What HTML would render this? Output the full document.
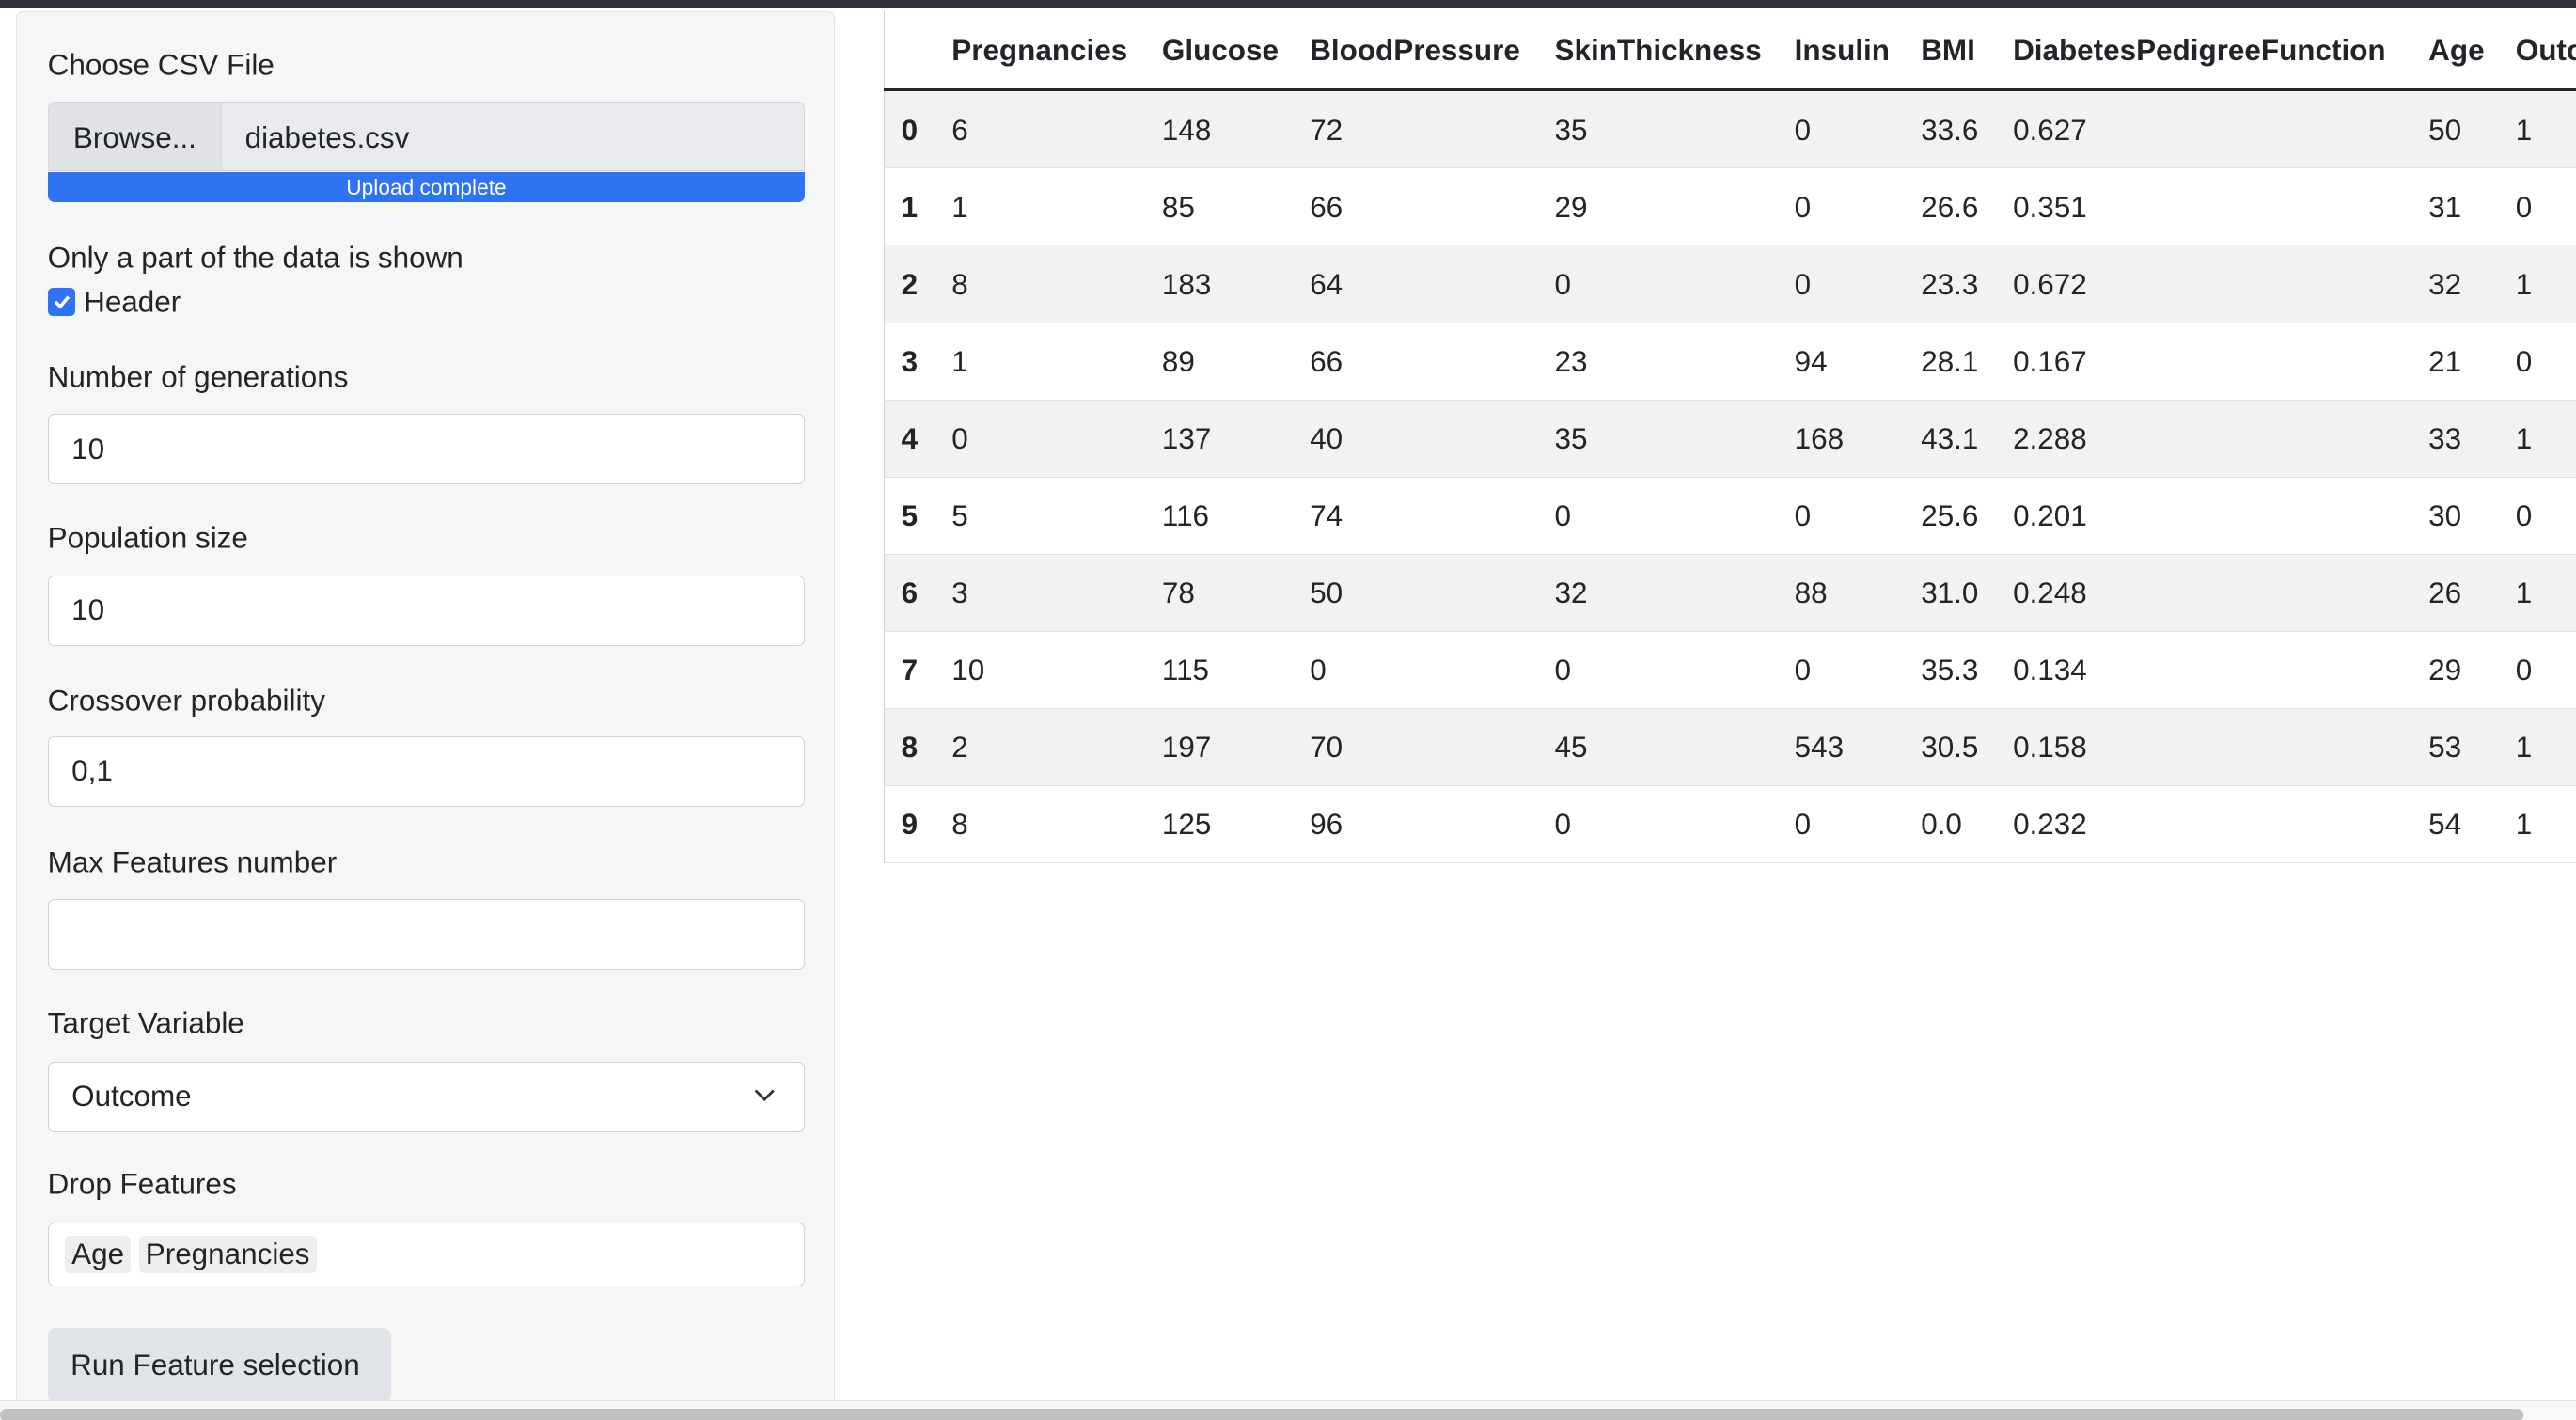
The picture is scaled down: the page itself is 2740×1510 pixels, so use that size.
<!DOCTYPE html>
<html><head><meta charset="utf-8"><style>
html,body{margin:0;padding:0;width:2740px;height:1510px;overflow:hidden;background:#fff}
#w{zoom:1.74745;width:1568px;height:864px;position:relative;overflow:hidden;font-family:"Liberation Sans",sans-serif;color:#212529;font-size:18px}
.top{position:absolute;left:0;top:0;width:1568px;height:4.5px;background:#303136}
.side{position:absolute;left:10px;top:7px;width:498px;height:860px;background:#f6f6f6;border:1px solid #e3e3e3;border-radius:4px;box-sizing:border-box}
.lab{position:absolute;left:29px;line-height:20px;transform:translateY(-9px)}
.inp{position:absolute;left:29px;width:461px;background:#fff;border:1px solid #ced4da;border-radius:4px;box-sizing:border-box;padding-left:14px;display:flex;align-items:center}
table{position:absolute;left:538px;top:7px;border-collapse:collapse;table-layout:fixed;width:1100px;border-left:1px solid #cfd2d5}
td,th{padding:1px 0 0 10px;text-align:left;white-space:nowrap;height:46px;border-bottom:1px solid #dee2e6}
td{height:45.4px}
th{font-weight:bold;border-bottom:2px solid #212529}
tbody tr:nth-child(odd){background:#f2f2f2}
td:first-child{font-weight:bold}
.tag{background:#eeeeee;border-radius:3px;padding:1px 4px;margin-right:5px}
</style></head><body><div id="w">
<div class="top"></div>
<div class="side"></div>
<div class="lab" style="top:39px">Choose CSV File</div>
<div style="position:absolute;left:29px;top:62px;width:461px;height:42px;border:1px solid #d3d5da;border-radius:4px 4px 0 0;box-sizing:border-box;background:#e9eaee;display:flex;overflow:hidden">
<div style="width:105px;background:#e0e2e6;border-right:1px solid #d3d5da;display:flex;align-items:center;justify-content:center;padding-top:2px">Browse...</div>
<div style="padding-left:14px;display:flex;align-items:center;padding-top:2px">diabetes.csv</div></div>
<div style="position:absolute;left:29px;top:105px;width:461px;height:18px;background:#2f72f3;border-radius:0 0 4px 4px;color:#fff;font-size:13px;text-align:center;line-height:19px">Upload complete</div>
<div class="lab" style="top:156px">Only a part of the data is shown</div>
<div style="position:absolute;left:29px;top:175px;width:17px;height:17px;background:#2f72f3;border-radius:3px"><svg width="17" height="17"><path d="M4.5 8.5l3 3 5-6" stroke="#fff" stroke-width="2" fill="none"/></svg></div>
<div class="lab" style="top:183px;left:51px">Header</div>
<div class="lab" style="top:229px">Number of generations</div>
<div class="inp" style="top:252px;height:43px">10</div>
<div class="lab" style="top:327px">Population size</div>
<div class="inp" style="top:350px;height:43px">10</div>
<div class="lab" style="top:426px">Crossover probability</div>
<div class="inp" style="top:448px;height:43px">0,1</div>
<div class="lab" style="top:524px">Max Features number</div>
<div class="inp" style="top:547px;height:43px"></div>
<div class="lab" style="top:622px">Target Variable</div>
<div class="inp" style="top:646px;height:43px">Outcome<svg style="position:absolute;right:17px;top:15px" width="14" height="10"><path d="M1.5 2l5.5 5.5 5.5-5.5" stroke="#333" stroke-width="1.6" fill="none"/></svg></div>
<div class="lab" style="top:720px">Drop Features</div>
<div class="inp" style="top:744px;height:39px;padding-left:10px"><span class="tag">Age</span><span class="tag">Pregnancies</span></div>
<div style="position:absolute;left:29px;top:808px;width:209px;height:46px;background:#e0e3e8;border-radius:5px;box-sizing:border-box;padding-left:14px;line-height:46px">Run Feature selection</div>
<div style="position:absolute;left:0;top:852px;width:1568px;height:12px;background:#f8f8f8;border-top:1px solid #e2e2e2"></div>
<div style="position:absolute;left:0;top:857px;width:1536px;height:8px;background:#c1c1c1;border-radius:4px"></div>
<table>
<colgroup><col style="width:31px"><col style="width:128px"><col style="width:90px"><col style="width:149px"><col style="width:146px"><col style="width:77px"><col style="width:56px"><col style="width:253px"><col style="width:53px"><col style="width:117px"></colgroup>
<thead><tr><th></th><th>Pregnancies</th><th>Glucose</th><th>BloodPressure</th><th>SkinThickness</th><th>Insulin</th><th>BMI</th><th>DiabetesPedigreeFunction</th><th>Age</th><th>Outcome</th></tr></thead>
<tbody>
<tr><td>0</td><td>6</td><td>148</td><td>72</td><td>35</td><td>0</td><td>33.6</td><td>0.627</td><td>50</td><td>1</td></tr>
<tr><td>1</td><td>1</td><td>85</td><td>66</td><td>29</td><td>0</td><td>26.6</td><td>0.351</td><td>31</td><td>0</td></tr>
<tr><td>2</td><td>8</td><td>183</td><td>64</td><td>0</td><td>0</td><td>23.3</td><td>0.672</td><td>32</td><td>1</td></tr>
<tr><td>3</td><td>1</td><td>89</td><td>66</td><td>23</td><td>94</td><td>28.1</td><td>0.167</td><td>21</td><td>0</td></tr>
<tr><td>4</td><td>0</td><td>137</td><td>40</td><td>35</td><td>168</td><td>43.1</td><td>2.288</td><td>33</td><td>1</td></tr>
<tr><td>5</td><td>5</td><td>116</td><td>74</td><td>0</td><td>0</td><td>25.6</td><td>0.201</td><td>30</td><td>0</td></tr>
<tr><td>6</td><td>3</td><td>78</td><td>50</td><td>32</td><td>88</td><td>31.0</td><td>0.248</td><td>26</td><td>1</td></tr>
<tr><td>7</td><td>10</td><td>115</td><td>0</td><td>0</td><td>0</td><td>35.3</td><td>0.134</td><td>29</td><td>0</td></tr>
<tr><td>8</td><td>2</td><td>197</td><td>70</td><td>45</td><td>543</td><td>30.5</td><td>0.158</td><td>53</td><td>1</td></tr>
<tr><td>9</td><td>8</td><td>125</td><td>96</td><td>0</td><td>0</td><td>0.0</td><td>0.232</td><td>54</td><td>1</td></tr>
</tbody></table>
</div></body></html>
